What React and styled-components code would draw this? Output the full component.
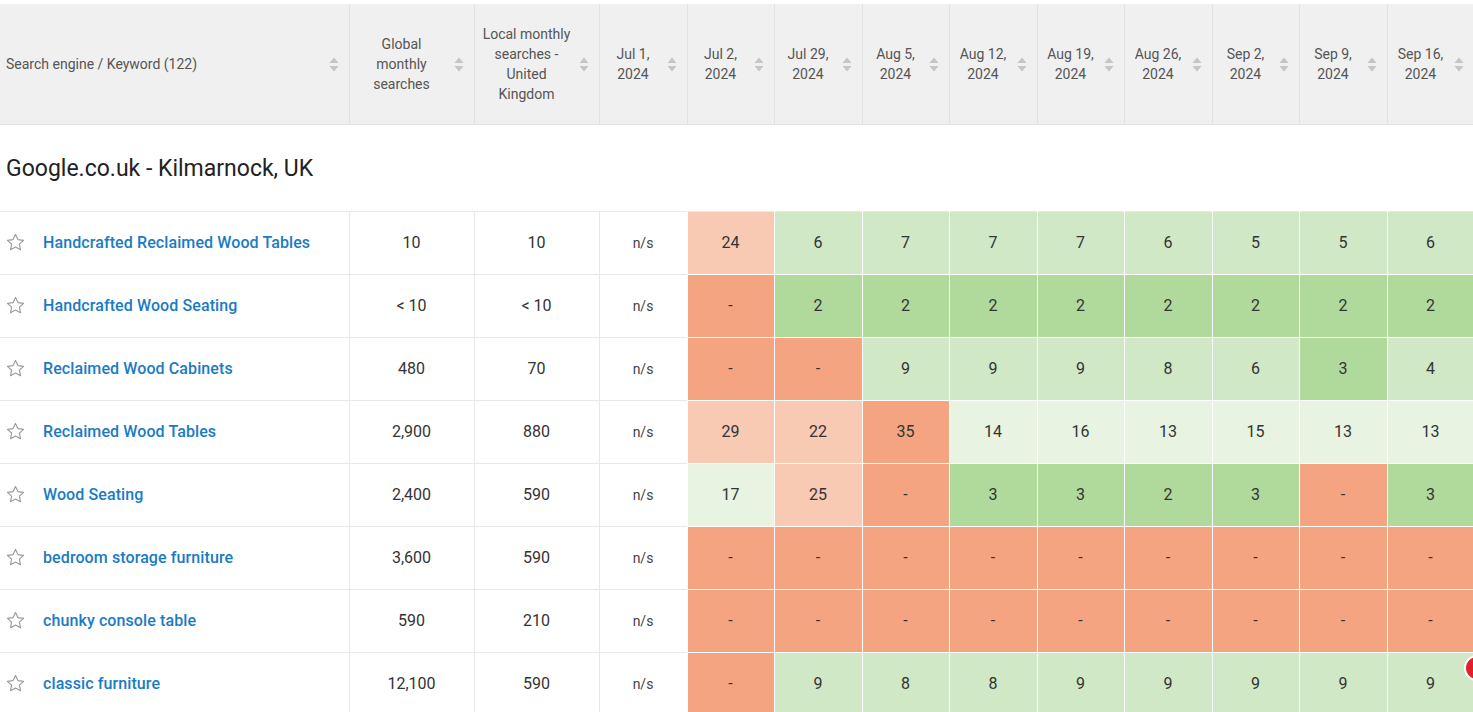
import React from 'react'
import styled, { createGlobalStyle } from 'styled-components'

const GlobalStyle = createGlobalStyle`
  html, body {
    margin: 0;
    padding: 0;
    overflow: hidden;
    background: #fff;
    font-family: Roboto, "Liberation Sans", sans-serif;
  }
`

const palette = {
  orange: '#f5a482',
  peach: '#f8c9b3',
  green: '#afda9b',
  lightGreen: '#d0e8c6',
  paleGreen: '#e8f3e2',
}

const Page = styled.div`
  padding-top: 4px;
  position: relative;
`

const Table = styled.table`
  width: 1474px;
  table-layout: fixed;
  border-collapse: collapse;
  color: #333;
`

const HeadCell = styled.th`
  height: 120px;
  background: #f0f0f0;
  border-right: 1px solid #e2e2e2;
  border-bottom: 1px solid #e2e2e2;
  font-weight: 400;
  font-size: 14px;
  line-height: 20px;
  color: #555;
  padding: 0 10px 0 6px;
`

const HeadInner = styled.div`
  display: flex;
  align-items: center;
  gap: 6px;
`

const HeadLabel = styled.span`
  flex: 1;
  text-align: ${(p) => (p.$left ? 'left' : 'center')};
`

const SortIcon = () => (
  <svg width="10" height="15" viewBox="0 0 10 15" style={{ flexShrink: 0 }}>
    <path d="M5 0.5 L9.5 6 H0.5 Z" fill="#c6c6c6" />
    <path d="M5 14.5 L9.5 9 H0.5 Z" fill="#c6c6c6" />
  </svg>
)

const GroupRow = styled.tr`
  height: 87px;
  border-bottom: 1px solid #e8e8e8;
`

const GroupTitle = styled.td`
  padding: 0 6px;
  font-size: 23px;
  color: #222;
`

const Row = styled.tr`
  height: 63px;
  border-bottom: 1px solid #e8e8e8;
`

const KeywordCell = styled.td`
  border-right: 1px solid #e8e8e8;
  padding: 0 0 2px 5px;
`

const KeywordInner = styled.div`
  display: flex;
  align-items: center;
  gap: 17px;
`

const KeywordLink = styled.a`
  color: #1a7bc5;
  font-size: 16px;
  font-weight: 500;
  letter-spacing: 0.1px;
  text-decoration: none;
  white-space: nowrap;
`

const NumberCell = styled.td`
  border-right: 1px solid #e8e8e8;
  text-align: center;
  font-size: 16px;
  color: #333;
  padding-bottom: 2px;
`

const NsCell = styled.td`
  text-align: center;
  font-size: 14px;
  color: #444;
`

const RankCell = styled.td`
  background: ${(p) => palette[p.$tone]};
  border: 1px solid #fff;
  border-top: 0;
  text-align: center;
  font-size: 16px;
  color: #333;
  padding-bottom: 2px;
`

const Badge = styled.div`
  position: absolute;
  left: 1464px;
  top: 655px;
  width: 22px;
  height: 22px;
  border-radius: 50%;
  background: #e31e2d;
  border: 2px solid #fff;
`

const Star = () => (
  <svg width="21" height="21" viewBox="0 0 24 24" fill="none" stroke="#9a9a9a" strokeWidth="1.3" strokeLinejoin="round">
    <path d="M12 2.8l2.8 5.9 6.4.8-4.7 4.4 1.2 6.4L12 17.2l-5.7 3.1 1.2-6.4-4.7-4.4 6.4-.8z" />
  </svg>
)

const columns = [
  { w: 349, label: ['Search engine / Keyword (122)'], left: true },
  { w: 125, label: ['Global', 'monthly', 'searches'] },
  { w: 125, label: ['Local monthly', 'searches -', 'United', 'Kingdom'] },
  { w: 88, label: ['Jul 1,', '2024'] },
  { w: 87, label: ['Jul 2,', '2024'] },
  { w: 88, label: ['Jul 29,', '2024'] },
  { w: 87, label: ['Aug 5,', '2024'] },
  { w: 88, label: ['Aug 12,', '2024'] },
  { w: 87, label: ['Aug 19,', '2024'] },
  { w: 88, label: ['Aug 26,', '2024'] },
  { w: 87, label: ['Sep 2,', '2024'] },
  { w: 88, label: ['Sep 9,', '2024'] },
  { w: 87, label: ['Sep 16,', '2024'] },
]

const O = 'orange', P = 'peach', G = 'green', L = 'lightGreen', V = 'paleGreen'

const rows = [
  { kw: 'Handcrafted Reclaimed Wood Tables', global: '10', local: '10',
    ranks: [['24', P], ['6', L], ['7', L], ['7', L], ['7', L], ['6', L], ['5', L], ['5', L], ['6', L]] },
  { kw: 'Handcrafted Wood Seating', global: '< 10', local: '< 10',
    ranks: [['-', O], ['2', G], ['2', G], ['2', G], ['2', G], ['2', G], ['2', G], ['2', G], ['2', G]] },
  { kw: 'Reclaimed Wood Cabinets', global: '480', local: '70',
    ranks: [['-', O], ['-', O], ['9', L], ['9', L], ['9', L], ['8', L], ['6', L], ['3', G], ['4', L]] },
  { kw: 'Reclaimed Wood Tables', global: '2,900', local: '880',
    ranks: [['29', P], ['22', P], ['35', O], ['14', V], ['16', V], ['13', V], ['15', V], ['13', V], ['13', V]] },
  { kw: 'Wood Seating', global: '2,400', local: '590',
    ranks: [['17', V], ['25', P], ['-', O], ['3', G], ['3', G], ['2', G], ['3', G], ['-', O], ['3', G]] },
  { kw: 'bedroom storage furniture', global: '3,600', local: '590',
    ranks: Array(9).fill(['-', O]) },
  { kw: 'chunky console table', global: '590', local: '210',
    ranks: Array(9).fill(['-', O]) },
  { kw: 'classic furniture', global: '12,100', local: '590',
    ranks: [['-', O], ['9', L], ['8', L], ['8', L], ['9', L], ['9', L], ['9', L], ['9', L], ['9', L]] },
]

export default function App() {
  return (
    <Page>
      <GlobalStyle />
      <Table>
        <colgroup>
          {columns.map((c, i) => (
            <col key={i} style={{ width: c.w }} />
          ))}
        </colgroup>
        <thead>
          <tr>
            {columns.map((c, i) => (
              <HeadCell key={i}>
                <HeadInner>
                  <HeadLabel $left={c.left}>
                    {c.label.map((line, j) => (
                      <React.Fragment key={j}>
                        {j > 0 && <br />}
                        {line}
                      </React.Fragment>
                    ))}
                  </HeadLabel>
                  <SortIcon />
                </HeadInner>
              </HeadCell>
            ))}
          </tr>
        </thead>
        <tbody>
          <GroupRow>
            <GroupTitle colSpan={13}>Google.co.uk - Kilmarnock, UK</GroupTitle>
          </GroupRow>
          {rows.map((r) => (
            <Row key={r.kw}>
              <KeywordCell>
                <KeywordInner>
                  <Star />
                  <KeywordLink href="#">{r.kw}</KeywordLink>
                </KeywordInner>
              </KeywordCell>
              <NumberCell>{r.global}</NumberCell>
              <NumberCell>{r.local}</NumberCell>
              <NsCell>n/s</NsCell>
              {r.ranks.map(([v, tone], i) => (
                <RankCell key={i} $tone={tone}>{v}</RankCell>
              ))}
            </Row>
          ))}
        </tbody>
      </Table>
      <Badge />
    </Page>
  )
}
